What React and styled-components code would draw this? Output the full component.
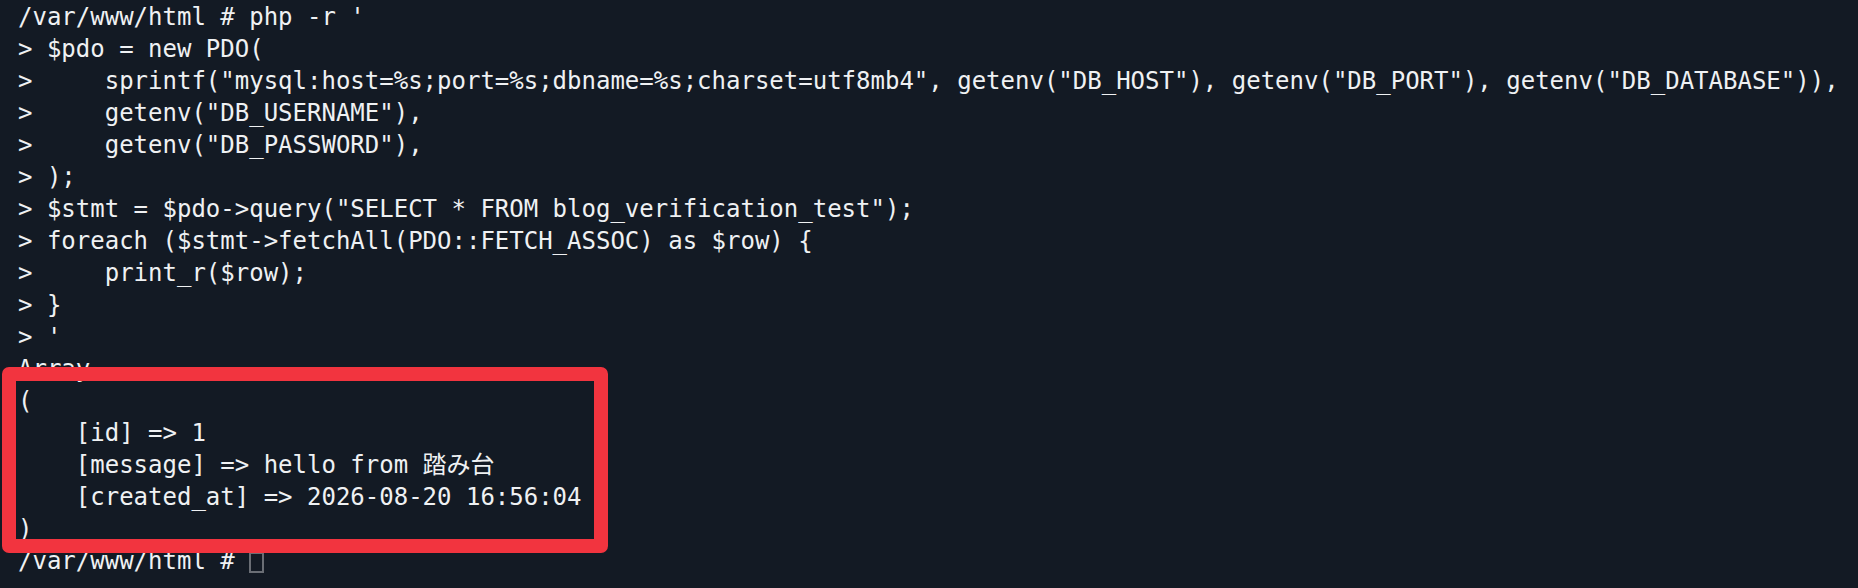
import React from 'react'
import styled, { createGlobalStyle } from 'styled-components'

const GlobalStyle = createGlobalStyle`
html, body {
  margin: 0;
  padding: 0;
  background: #131a24;
}
`

const Terminal = styled.div`
position: relative;
min-height: 100vh;
box-sizing: border-box;
padding: 1px 0 0 18px;
background: #131a24;
color: #eff1f3;
font-family: "DejaVu Sans Mono", "Noto Sans CJK JP", monospace;
font-size: 24px;
line-height: 32px;
overflow: hidden;
`

const Line = styled.div`
white-space: pre;
height: 32px;
`

const Cursor = styled.span`
display: inline-block;
width: 11px;
height: 17px;
border: 2px solid #6a6e75;
vertical-align: -4px;
`

const Highlight = styled.div`
position: absolute;
left: 2px;
top: 367px;
width: 606px;
height: 186px;
box-sizing: border-box;
border: 14px solid #f2343f;
border-radius: 7px;
pointer-events: none;
`

const lines = [
  `/var/www/html # php -r '`,
  `> $pdo = new PDO(`,
  `>     sprintf("mysql:host=%s;port=%s;dbname=%s;charset=utf8mb4", getenv("DB_HOST"), getenv("DB_PORT"), getenv("DB_DATABASE")),`,
  `>     getenv("DB_USERNAME"),`,
  `>     getenv("DB_PASSWORD"),`,
  `> );`,
  `> $stmt = $pdo->query("SELECT * FROM blog_verification_test");`,
  `> foreach ($stmt->fetchAll(PDO::FETCH_ASSOC) as $row) {`,
  `>     print_r($row);`,
  `> }`,
  `> '`,
  `Array`,
  `(`,
  `    [id] => 1`,
  `    [message] => hello from 踏み台`,
  `    [created_at] => 2026-08-20 16:56:04`,
  `)`,
]

export default function App() {
  return (
    <>
      <GlobalStyle />
      <Terminal>
        {lines.map((text, i) => (
          <Line key={i}>{text}</Line>
        ))}
        <Line>/var/www/html # <Cursor /></Line>
        <Highlight />
      </Terminal>
    </>
  )
}
